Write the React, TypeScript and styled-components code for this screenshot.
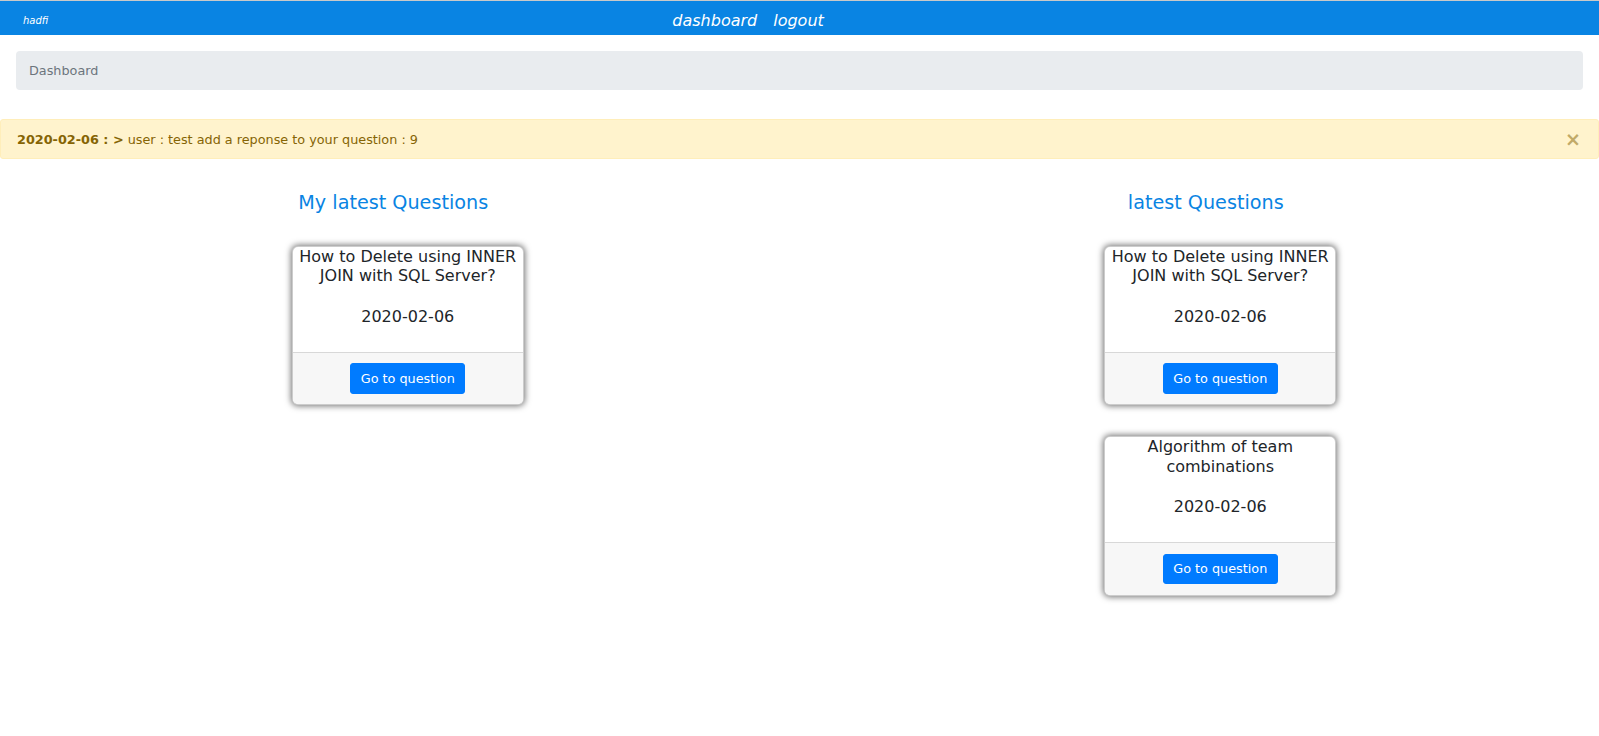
import styled, { createGlobalStyle } from "styled-components";

const GlobalStyle = createGlobalStyle`
  html, body {
    margin: 0;
    padding: 0;
    background: #fff;
  }
  body {
    font-family: "DejaVu Sans", "Liberation Sans", sans-serif;
    font-size: 12.8px;
    line-height: 1.5;
    color: #212529;
  }
  * {
    box-sizing: border-box;
  }
`;

interface Question {
  id: number;
  title: string;
  date: string;
}

const myQuestions: Question[] = [
  { id: 9, title: "How to Delete using INNER JOIN with SQL Server?", date: "2020-02-06" },
];

const latestQuestions: Question[] = [
  { id: 9, title: "How to Delete using INNER JOIN with SQL Server?", date: "2020-02-06" },
  { id: 8, title: "Algorithm of team combinations", date: "2020-02-06" },
];

const QuestionCard = ({ question }: { question: Question }) => {
  return (
    <Card>
      <CardBody>
        <CardTitle>{question.title}</CardTitle>
        <CardDate>{question.date}</CardDate>
      </CardBody>
      <CardFooter>
        <Button type="button">Go to question</Button>
      </CardFooter>
    </Card>
  );
};

const App = () => {
  return (
    <Page>
      <GlobalStyle />
      <NavBar>
        <Brand>hadfi</Brand>
        <NavLinks>
          <NavLink href="#">dashboard</NavLink>
          <NavLink href="#">logout</NavLink>
        </NavLinks>
      </NavBar>

      <Breadcrumb>Dashboard</Breadcrumb>

      <Alert>
        <span>
          <b>2020-02-06 : &gt;</b> user : test add a reponse to your question : 9
        </span>
        <CloseButton type="button">×</CloseButton>
      </Alert>

      <Row>
        <Col>
          <ColTitle>My latest Questions</ColTitle>
          <CardList>
            {myQuestions.map((q) => (
              <QuestionCard key={q.id} question={q} />
            ))}
          </CardList>
        </Col>
        <Col>
          <ColTitle>latest Questions</ColTitle>
          <CardList>
            {latestQuestions.map((q) => (
              <QuestionCard key={q.id} question={q} />
            ))}
          </CardList>
        </Col>
      </Row>
    </Page>
  );
};

export default App;

const Page = styled.div`
  min-height: 736px;
  border-top: 1px solid #c9c9c9;
  overflow: hidden;
`;

const NavBar = styled.nav`
  height: 34px;
  background: #0984e3;
  display: flex;
  align-items: center;
  padding: 0 23px;
`;

const Brand = styled.span`
  font-size: 10px;
  font-style: italic;
  color: #fff;
  margin-top: 4px;
`;

const NavLinks = styled.div`
  display: flex;
  gap: 16px;
  margin-left: 624px;
  margin-top: 5px;
`;

const NavLink = styled.a`
  color: #fff;
  font-size: 16px;
  font-style: italic;
  text-decoration: none;
`;

const Breadcrumb = styled.div`
  margin: 16px 16px 29px;
  height: 39px;
  padding: 0 13px;
  display: flex;
  align-items: center;
  background: #e9ecef;
  border-radius: 4px;
  color: #6c757d;
`;

const Alert = styled.div`
  display: flex;
  justify-content: space-between;
  align-items: center;
  padding: 9.5px 17px 9.5px 16px;
  background: #fff3cd;
  border: 1px solid #ffeeba;
  border-radius: 3px;
  color: #856404;

  b {
    font-weight: 700;
  }
`;

const CloseButton = styled.button`
  border: 0;
  background: transparent;
  padding: 0;
  font-family: inherit;
  font-size: 19px;
  font-weight: 700;
  line-height: 19px;
  color: #856404;
  opacity: 0.5;
  cursor: pointer;
`;

const Row = styled.div`
  display: flex;
  margin: 0 -13px;
`;

const Col = styled.div`
  flex: 1 1 0;
  padding: 0 13px;
  display: flex;
  flex-direction: column;
  align-items: center;
`;

const ColTitle = styled.h4`
  margin: 32px 0 31px;
  font-size: 19.2px;
  font-weight: 400;
  line-height: 23.4px;
  color: #0984e3;
`;

const CardList = styled.div`
  display: flex;
  flex-direction: column;
  align-items: center;
  gap: 31px;
  padding-left: 29px;
`;

const Card = styled.div`
  width: 232px;
  background: #fff;
  border: 1px solid rgba(0, 0, 0, 0.2);
  border-radius: 6px;
  box-shadow: 0 0 6px 1px rgba(0, 0, 0, 0.55);
  overflow: hidden;
  text-align: center;
`;

const CardBody = styled.div`
  padding: 0 0 25.5px;
`;

const CardTitle = styled.h5`
  margin: 0;
  font-size: 16px;
  font-weight: 400;
  line-height: 19.5px;
  color: #212529;
`;

const CardDate = styled.div`
  margin-top: 21px;
  font-size: 16px;
  line-height: 19.5px;
  color: #212529;
`;

const CardFooter = styled.div`
  padding: 10.4px 16px;
  background: #f7f7f7;
  border-top: 1px solid rgba(0, 0, 0, 0.125);
`;

const Button = styled.button`
  font-family: inherit;
  font-size: 12.8px;
  line-height: 19.2px;
  padding: 4.8px 9.6px;
  border: 1px solid #007bff;
  border-radius: 3px;
  background: #007bff;
  color: #fff;
  cursor: pointer;
`;
